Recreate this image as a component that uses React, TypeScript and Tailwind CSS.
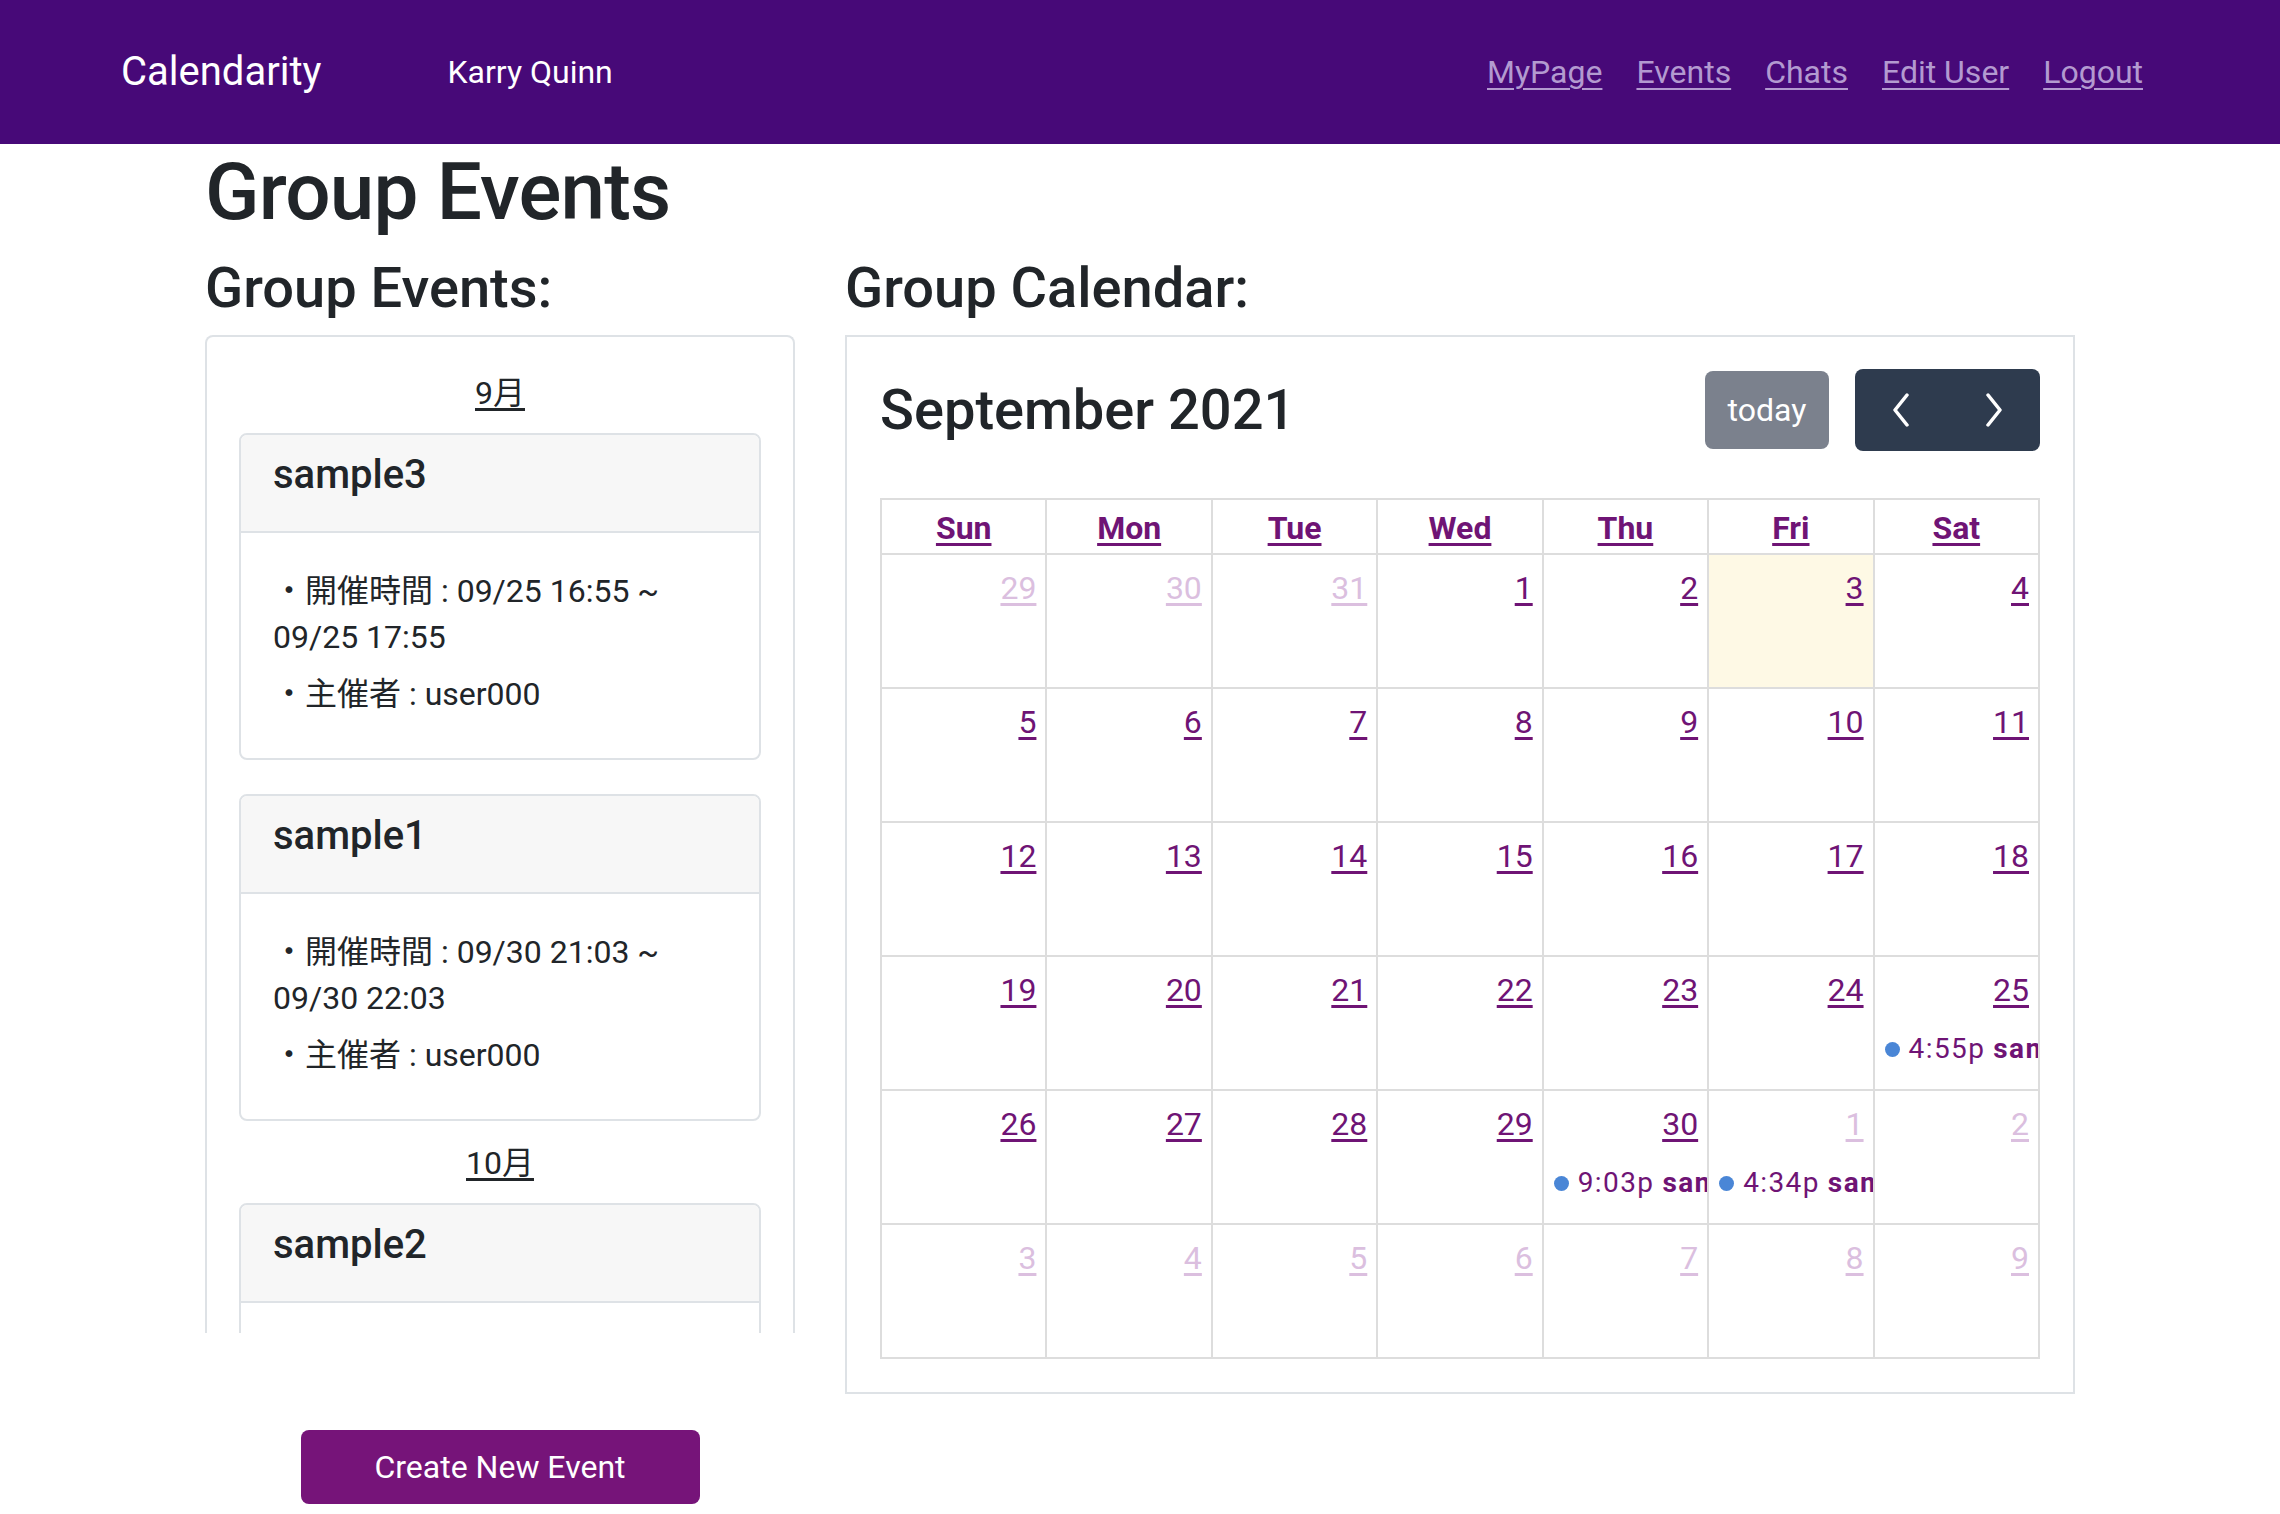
import React from 'react'

const LINK = 'text-[#6f1475]'
const MUTED = 'text-[#dbbfdf]'

type Ev = { time: string; title: string }
type Day = { n: number; muted?: boolean; today?: boolean; ev?: Ev }

const weeks: Day[][] = [
  [{ n: 29, muted: true }, { n: 30, muted: true }, { n: 31, muted: true }, { n: 1 }, { n: 2 }, { n: 3, today: true }, { n: 4 }],
  [{ n: 5 }, { n: 6 }, { n: 7 }, { n: 8 }, { n: 9 }, { n: 10 }, { n: 11 }],
  [{ n: 12 }, { n: 13 }, { n: 14 }, { n: 15 }, { n: 16 }, { n: 17 }, { n: 18 }],
  [{ n: 19 }, { n: 20 }, { n: 21 }, { n: 22 }, { n: 23 }, { n: 24 }, { n: 25, ev: { time: '4:55p', title: 'sample3' } }],
  [
    { n: 26 }, { n: 27 }, { n: 28 }, { n: 29 },
    { n: 30, ev: { time: '9:03p', title: 'sample1' } },
    { n: 1, muted: true, ev: { time: '4:34p', title: 'sample2' } },
    { n: 2, muted: true },
  ],
  [3, 4, 5, 6, 7, 8, 9].map((n) => ({ n, muted: true })),
]

const groups = [
  {
    month: '9月',
    events: [
      { title: 'sample3', from: '09/25 16:55', to: '09/25 17:55', owner: 'user000' },
      { title: 'sample1', from: '09/30 21:03', to: '09/30 22:03', owner: 'user000' },
    ],
  },
  {
    month: '10月',
    events: [{ title: 'sample2', from: '10/01 16:34', to: '10/01 17:34', owner: 'user000' }],
  },
]

function EventCard({ title, from, to, owner }: { title: string; from: string; to: string; owner: string }) {
  return (
    <div className="rounded-[8px] border-2 border-[#dee2e6] overflow-hidden">
      <div className="bg-[#f7f7f7] border-b-2 border-[#dee2e6] px-[32px] pt-[16px] pb-[16px]">
        <h5 className="mb-[16px] text-[40px] leading-[48px] font-medium">{title}</h5>
      </div>
      <div className="px-[32px] pt-[35px] pb-[30px] text-[32px] leading-[46px]">
        <p className="mb-[11px]">・開催時間 : {from} ~ {to}</p>
        <p className="mb-[11px]">・主催者 : {owner}</p>
      </div>
    </div>
  )
}

function Chevron({ left }: { left?: boolean }) {
  return (
    <svg width="18" height="34" viewBox="0 0 18 34" fill="none">
      <polyline
        points={left ? '15,2 3,17 15,32' : '3,2 15,17 3,32'}
        stroke="white"
        strokeWidth="3.5"
        strokeLinecap="round"
        strokeLinejoin="round"
      />
    </svg>
  )
}

export default function App() {
  return (
    <div className="min-h-[1514px] bg-white text-[#212529] font-['Roboto','Noto_Sans_CJK_JP',sans-serif]">
      {/* navbar */}
      <nav className="h-[144px] bg-[#470978] pl-[121px] pr-[120px] flex items-center">
        <a className="text-[40px] leading-[60px] text-white">Calendarity</a>
        <span className="ml-[126px] text-[32px] leading-[48px] text-white">Karry Quinn</span>
        <div className="ml-auto flex text-[32px] leading-[48px] text-[#b39ad0]">
          {['MyPage', 'Events', 'Chats', 'Edit User', 'Logout'].map((l) => (
            <a key={l} className="px-[17px] underline underline-offset-[5px] decoration-2">
              {l}
            </a>
          ))}
        </div>
      </nav>

      <main className="mx-auto w-[1870px]">
        <h1 className="text-[80px] leading-[96px] font-medium tracking-[-0.01em] mb-[15px]">Group Events</h1>

        <div className="flex items-start">
          {/* left column */}
          <div className="w-[590px]">
            <h3 className="text-[56px] leading-[67px] font-medium mb-[13px]">Group Events:</h3>
            <div className="h-[998px] overflow-hidden rounded-t-[8px] border-2 border-b-0 border-[#dee2e6] px-[32px] pt-[32px]">
              {groups.map((g, gi) => (
                <div key={g.month} className={gi > 0 ? 'mt-[18px]' : ''}>
                  <div className="text-center text-[32px] leading-[48px] mb-[16px]">
                    <span className="underline underline-offset-[4px]">{g.month}</span>
                  </div>
                  <div className="flex flex-col gap-[34px]">
                    {g.events.map((e) => (
                      <EventCard key={e.title} {...e} />
                    ))}
                  </div>
                </div>
              ))}
            </div>
            <div className="mt-[97px] flex justify-center">
              <button className="w-[399px] h-[74px] rounded-[8px] bg-[#761479] text-white text-[32px]">
                Create New Event
              </button>
            </div>
          </div>

          {/* calendar column */}
          <div className="ml-[50px] w-[1230px]">
            <h3 className="text-[56px] leading-[67px] font-medium mb-[13px]">Group Calendar:</h3>
            <div className="border-2 border-[#dee2e6] px-[33px] pt-[32px] pb-[33px]">
              <div className="h-[82px] mb-[47px] flex items-center">
                <h2 className="text-[56px] leading-[67px] font-medium">September 2021</h2>
                <button className="ml-auto h-[78px] w-[124px] rounded-[8px] bg-[#7b818d] text-white text-[32px]">
                  today
                </button>
                <div className="ml-[26px] h-[82px] w-[185px] rounded-[8px] bg-[#2e3b4e] flex">
                  <button className="flex-1 flex items-center justify-center">
                    <Chevron left />
                  </button>
                  <button className="flex-1 flex items-center justify-center">
                    <Chevron />
                  </button>
                </div>
              </div>

              <div className="w-[1160px] grid grid-cols-7 border-t-2 border-l-2 border-[#dddddd]">
                {['Sun', 'Mon', 'Tue', 'Wed', 'Thu', 'Fri', 'Sat'].map((d) => (
                  <div
                    key={d}
                    className="h-[55px] border-r-2 border-b-2 border-[#dddddd] pt-[4px] text-center text-[32px] leading-[48px] font-bold"
                  >
                    <span className={`${LINK} underline underline-offset-[4px]`}>{d}</span>
                  </div>
                ))}
                {weeks.flat().map((day, i) => (
                  <div
                    key={i}
                    className={`h-[134px] overflow-hidden border-r-2 border-b-2 border-[#dddddd] ${
                      day.today ? 'bg-[#fef9e5]' : ''
                    }`}
                  >
                    <div className="pt-[9px] pr-[9px] text-right text-[32px] leading-[48px]">
                      <span className={`${day.muted ? MUTED : LINK} underline underline-offset-[4px]`}>{day.n}</span>
                    </div>
                    {day.ev && (
                      <div className={`mt-[20px] pl-[10px] flex items-center whitespace-nowrap text-[28px] leading-[30px] tracking-[0.05em] ${LINK}`}>
                        <span className="mr-[9px] h-[15px] w-[15px] shrink-0 rounded-full bg-[#4a86d6]"></span>
                        <span>{day.ev.time}</span>
                        <span className="ml-[8px] font-bold">{day.ev.title}</span>
                      </div>
                    )}
                  </div>
                ))}
              </div>
            </div>
          </div>
        </div>
      </main>
    </div>
  )
}
